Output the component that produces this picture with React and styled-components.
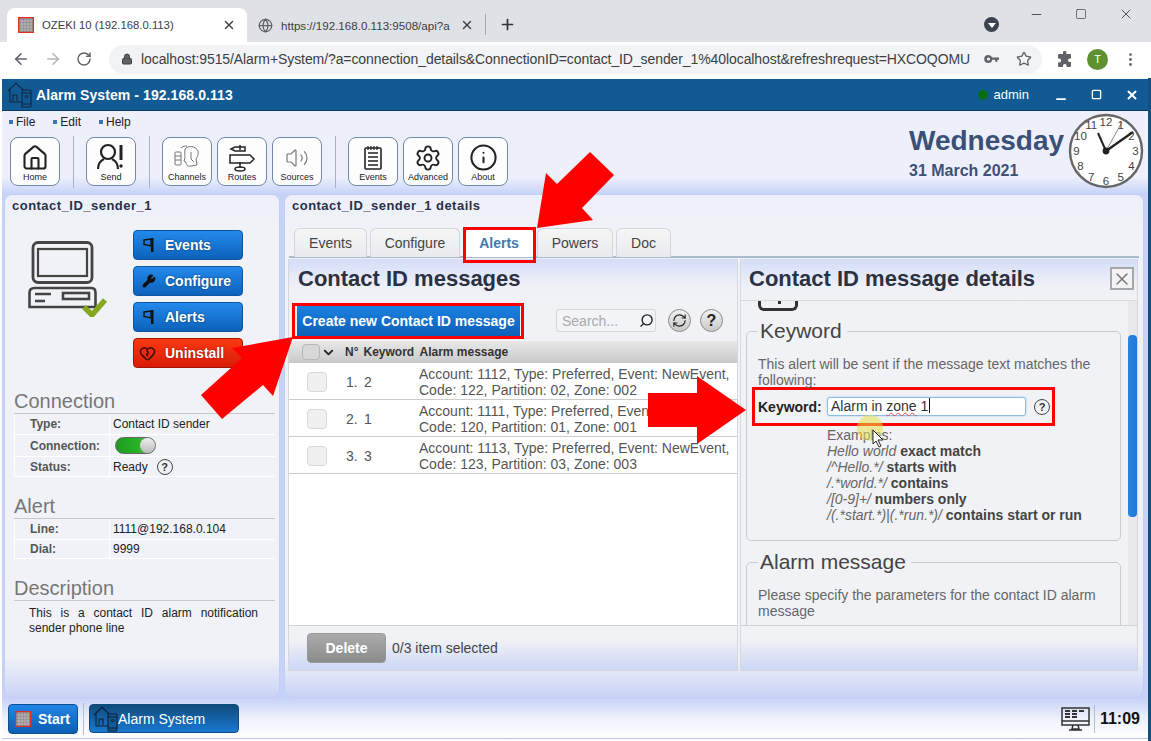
import React from "react";
import styled, { createGlobalStyle } from "styled-components";
import { ArrowLeft, ArrowRight, RotateCw, Lock, Star, EllipsisVertical, Minus, Square, X, Plus, Globe, Search, RefreshCw, ChevronDown, Wrench, HeartCrack, Home, Volume2, Settings, Info } from "lucide-react";

const Global = createGlobalStyle`
  html, body { margin: 0; padding: 0; background: #fff; overflow: hidden; }
  * { box-sizing: border-box; }
  body { font-family: "Liberation Sans", Arial, sans-serif; }
`;

const Page = styled.div`position: relative; width: 1151px; height: 741px; overflow: hidden; background: #fff;`;

const TabStrip = styled.div`height: 42px; background: #dee1e6; display: flex; align-items: flex-end; padding-left: 7px; position: relative;`;
const BrowserTab = styled.div`
  width: ${p => p.$w}px; height: 34px; display: flex; align-items: center; gap: 8px; padding: 0 11px;
  background: ${p => p.$active ? "#fff" : "transparent"}; border-radius: 8px 8px 0 0;
  color: #3c4043; white-space: nowrap; overflow: hidden;
`;
const TabLabel = styled.span`flex: 1; overflow: hidden; font-size: ${p => p.$fs}px;`;
const TabDivider = styled.div`width: 1px; height: 21px; background: #a6a9ae; margin: 0 0 7px 0;`;
const PlusWrap = styled.div`margin: 0 0 9px 13px; display: flex;`;
const StripRight = styled.div`position: absolute; right: 0; top: 0; height: 28px; display: flex; align-items: center; gap: 31px; padding-right: 17px; color: #222;`;
const ProfileDot = styled.div`position: absolute; left: 984px; top: 17px; width: 15px; height: 15px; border-radius: 50%; background: #3c4350; display: flex; align-items: center; justify-content: center;`;
const DotArrow = styled.div`width: 0; height: 0; border-left: 4px solid transparent; border-right: 4px solid transparent; border-top: 5px solid #fff; margin-top: 1px;`;

const NavBar = styled.div`height: 36px; display: flex; align-items: center; background: #fff; padding: 0 0 2px 12px; color: #5f6368;`;
const NavButtons = styled.div`display: flex; align-items: center; gap: 14px; margin-right: 17px;`;
const Omnibox = styled.div`width: 933px; height: 29px; border-radius: 15px; background: #f1f3f4; display: flex; align-items: center; padding: 0 10px 0 12px; gap: 8px; font-size: 14px; color: #3c4043; white-space: nowrap;`;
const Url = styled.span`flex: 1; letter-spacing: -0.09px; overflow: hidden;`;
const OmniIcons = styled.div`display: flex; gap: 17px; align-items: center; color: #5f6368;`;
const NavRight = styled.div`display: flex; align-items: center; gap: 14px; margin-left: 15px;`;
const Avatar = styled.div`width: 21px; height: 21px; border-radius: 50%; background: #5f9132; color: #fff; font-size: 11px; display: flex; align-items: center; justify-content: center;`;

const AppWindow = styled.div`
  margin: 1px 0 0 2px; width: 1146px; height: 659px; display: flex; flex-direction: column;
  background: #edf0fb;
`;
const RightEdge = styled.div`position: absolute; left: 1148px; top: 78px; width: 3px; height: 663px; background: #14507e;`;

const TitleBar = styled.div`height: 32px; flex: none; background: #125a93; border-bottom: 1px solid #0d3a5f; display: flex; align-items: center; padding: 0 9px 0 5px; color: #fff;`;
const TitleText = styled.div`font-size: 14px; font-weight: bold; margin-left: 4px; flex: 1; letter-spacing: 0.08px;`;
const OnlineDot = styled.span`width: 10px; height: 10px; border-radius: 50%; background: #0a6d12; margin-right: 6px;`;
const AdminName = styled.span`font-size: 13px; margin-right: 25px;`;
const WinControls = styled.div`display: flex; gap: 23px; align-items: center;`;

const Header = styled.div`height: 83px; flex: none; display: flex; background: linear-gradient(#edf0fb 0, #edf0fb 66px, #c6d2f8 100%);`;
const HeaderLeft = styled.div`flex: 1; padding-left: 6px;`;
const Menu = styled.div`display: flex; gap: 18px; height: 21px; align-items: center; font-size: 12px; color: #222; padding-left: 1px;`;
const MenuItem = styled.span`display: flex; align-items: center; gap: 3px; &::before { content: ""; width: 4px; height: 4px; background: #3a78b5; }`;
const Toolbar = styled.div`display: flex; margin-top: 5px; align-items: flex-start; padding-left: 2px;`;
const ToolBtn = styled.div`
  width: 50px; height: 49px; border: 1px solid #6f8aad; border-radius: 8px; background: #fdfdfe;
  display: flex; flex-direction: column; align-items: center; justify-content: flex-start; padding-top: 5px;
  font-size: 9px; color: #222; margin-right: 5px; flex: none; position: relative;
`;
const ToolIcon = styled.div`height: 29px; display: flex; align-items: center; justify-content: center; color: #222;`;
const ToolLabel = styled.div`margin-top: 0;`;
const ToolSep = styled.div`width: 1px; height: 52px; background: #a9b2c2; margin: -1px 12px 0 8px; flex: none;`;
const DateBlock = styled.div`width: 158px; padding-top: 14px; color: #3b5078; font-weight: bold; flex: none;`;
const DayName = styled.div`font-size: 28px; line-height: 31px; margin-left: -1px;`;
const DateLine = styled.div`font-size: 16px; line-height: 18px; margin: 6px 0 0 -1px; color: #3f5175;`;
const ClockBox = styled.div`width: 80px; flex: none; padding-top: 2px;`;

const Main = styled.div`height: 504px; flex: none; display: flex; gap: 4px; padding: 0 4px 0 2px; background: #c6d2f8;`;
const Panel = styled.div`
  width: ${p => p.$w ? p.$w + "px" : "auto"}; flex: ${p => p.$w ? "none" : 1}; position: relative;
  border: 1px solid #c3cef2; border-radius: 8px; display: flex; flex-direction: column;
  background: linear-gradient(#edf0fa 0, #f0f2f7 30px, #f0f2f7 462px, #c9d4f6 100%);
`;
const PanelTitle = styled.div`font-size: 13px; font-weight: bold; letter-spacing: 0.48px; color: #29304a; padding: 3px 0 0 ${p => p.$pad}px; height: 20px; line-height: 15px;`;

const TopRow = styled.div`display: flex; padding-top: 15px; height: 173px;`;
const BigIcon = styled.div`width: 128px; padding: 11px 0 0 23px; flex: none;`;
const ActionList = styled.div`display: flex; flex-direction: column; gap: 6px; width: 110px;`;
const ActionBtn = styled.div`
  height: 30px; border-radius: 4px; border: 1px solid ${p => p.$red ? "#a01505" : "#0e56a0"};
  background: ${p => p.$red ? "linear-gradient(#fb3a12,#d81c06)" : "linear-gradient(#2389ec,#0c62b9)"};
  color: #fff; font-size: 14px; font-weight: bold; text-shadow: 0 0 2px rgba(0,0,0,.5);
  display: flex; align-items: center; padding-left: ${p => p.$red ? 5 : 8}px; gap: 9px;
`;
const SideSection = styled.div`padding-left: 9px; margin-top: ${p => p.$mt}px;`;
const SideHead = styled.div`font-size: 20px; line-height: 23px; color: #777; border-bottom: 1px solid #c6c8cc; width: 261px; height: 24px;`;
const InfoTable = styled.div`width: 261px; border-left: 1px solid #fff;`;
const InfoRow = styled.div`display: grid; grid-template-columns: 95px 1fr; height: ${p => p.$h}px; align-items: center; border-bottom: 1px solid #fff;`;
const InfoKey = styled.div`font-size: 12px; font-weight: bold; color: #555; padding-left: 15px; height: 100%; display: flex; align-items: center; border-right: 1px solid #fff;`;
const InfoVal = styled.div`font-size: 12px; color: #222; padding-left: 3px; display: flex; align-items: center; gap: 9px;`;
const Toggle = styled.div`width: 41px; height: 17px; margin-left: 2px; border-radius: 9px; background: linear-gradient(90deg,#1f9a1f,#27b327 55%,#9aa69a); border: 1px solid #666; position: relative; &::after { content: ""; position: absolute; right: 0; top: 0; width: 15px; height: 15px; border-radius: 50%; background: linear-gradient(#eee,#bbb); }`;
const HelpRound = styled.div`width: ${p => p.$s}px; height: ${p => p.$s}px; border-radius: 50%; border: 1.5px solid #444; color: #333; font-size: ${p => p.$s - 5}px; font-weight: bold; display: flex; align-items: center; justify-content: center; flex: none;`;
const DescText = styled.div`font-size: 12px; line-height: 15px; color: #222; padding: 5px 0 0 15px; width: 244px; text-align: justify;`;

const TabsRow = styled.div`display: flex; height: 30px; margin: 13px 4px 0 4px; padding-left: 5px; gap: 3px; border-bottom: 2px solid #a8bad0;`;
const Tab = styled.div`
  width: ${p => p.$w}px; height: 29px; border: 1px solid #d3d6dc; border-bottom: none; border-radius: 6px 6px 0 0;
  display: flex; align-items: center; justify-content: center; font-size: 14px;
  background: ${p => p.$active ? "#fff" : "linear-gradient(#f6f6f6,#e9eaee)"}; color: ${p => p.$active ? "#4178b0" : "#444"}; font-weight: ${p => p.$active ? "bold" : "normal"};
  position: relative; margin-left: ${p => p.$ml || 0}px;
  ${p => p.$active && `&::after { content: ""; position: absolute; left: -2px; top: -2px; right: -3px; bottom: -6px; border: 3px solid #f00; }`}
`;
const Panes = styled.div`display: flex; height: 412px; margin: 1px 4px 0 3px; gap: 2px;`;
const Pane = styled.div`width: ${p => p.$w}px; flex: none; display: flex; flex-direction: column; border: 1px solid #d5d7dc; border-top: none; background: #f1f2f6;`;
const PaneHead = styled.div`height: 42px; flex: none; background: linear-gradient(#d4ddf8,#eef0f8 26px,#f1f2f6); font-size: 22px; font-weight: bold; color: #2c3140; padding: 7px 0 0 ${p => p.$line ? 8 : 9}px; line-height: 26px; display: flex; justify-content: space-between; border-bottom: ${p => p.$line ? "1px solid #d8d9dd" : "none"};`;
const CloseBox = styled.div`width: 24px; height: 23px; border: 2px solid #a7a7a7; margin: 1px 3px 0 0; display: flex; align-items: center; justify-content: center; color: #777; background: #f3f3f5;`;
const ActionsBar = styled.div`display: flex; height: 40px; flex: none; padding: 4px 0 0 6px; align-items: flex-start;`;
const CreateBtn = styled.div`width: 223px; height: 30px; margin: 1px 36px 0 2px; background: linear-gradient(#1c82e2,#0e5fb6); color: #fff; font-size: 14px; font-weight: bold; display: flex; align-items: center; justify-content: center; position: relative; white-space: nowrap; &::after { content: ""; position: absolute; left: -5px; top: -3px; right: -4px; bottom: -3px; border: 3px solid #f00; }`;
const SearchBox = styled.div`width: 100px; height: 23px; margin-top: 4px; border: 1px solid #d4d6da; border-radius: 3px; display: flex; align-items: center; justify-content: space-between; padding: 0 1px 0 5px; font-size: 14px; color: #aaa; background: #f3f4f7;`;
const RoundTools = styled.div`display: flex; gap: 9px; margin: 4px 0 0 12px;`;
const RoundBtn = styled.div`width: 23px; height: 23px; border-radius: 50%; border: 1px solid #888; background: linear-gradient(#f0f0f0,#c9c9c9); display: flex; align-items: center; justify-content: center; font-size: 16px; font-weight: bold; color: #222;`;
const ListHead = styled.div`height: 22px; flex: none; background: linear-gradient(#e8e8e8,#c9c9c9); display: flex; align-items: center; font-size: 12px; font-weight: bold; color: #333; padding-left: 13px;`;
const HeadBox = styled.div`width: 18px; height: 16px; border: 1px solid #b5b5b5; border-radius: 4px; background: #d8d8d8; flex: none;`;
const HeadCaret = styled.div`width: 25px; padding-left: 1px; display: flex; flex: none; color: #222;`;
const HeadKw = styled.span`margin-left: 5px; width: 56px;`;
const ListBody = styled.div`flex: 1; background: #fff; overflow: hidden;`;
const ListRow = styled.div`height: 37px; display: grid; grid-template-columns: 57px 18px 55px 1fr; align-items: center; border-bottom: 1px solid #ccc; font-size: 14px; color: #555; padding-top: 1px;`;
const RowCheck = styled.div`width: 20px; height: 20px; border: 1px solid #d8d8d8; border-radius: 4px; background: #f0f0f0; margin-left: 18px;`;
const RowMsg = styled.div`line-height: 16px; white-space: nowrap; overflow: hidden;`;
const PaneFoot = styled.div`height: 45px; flex: none; border-top: 1px solid #d0d1d5; display: flex; align-items: center; background: linear-gradient(#f1f2f6 30%,#ccd6f5); font-size: 14px; color: #444; gap: 6px; padding-left: 18px;`;
const GrayBtn = styled.div`width: 79px; height: 30px; border-radius: 4px; background: linear-gradient(#ababab,#8b8b8b); color: #fff; font-weight: bold; font-size: 14px; display: flex; align-items: center; justify-content: center; border: 1px solid #999;`;

const DetailBody = styled.div`flex: 1; display: flex; overflow: hidden; min-height: 0;`;
const DetailScroll = styled.div`flex: 1; padding-left: 5px; overflow: hidden;`;
const TopIconPiece = styled.div`width: 40px; height: 10px; margin-left: 12px; border: 3px solid #333; border-top: none; border-radius: 0 0 6px 6px; position: relative; &::after { content: ""; position: absolute; left: 17px; top: 0; width: 3px; height: 3px; background: #333; }`;
const Field = styled.fieldset`margin: ${p => p.$mt}px 0 0 0; border: 1px solid #c9cbd0; border-radius: 5px; padding: 15px 12px 12px 11px; width: 375px; height: ${p => p.$h}px;`;
const FieldLegend = styled.legend`font-size: 21px; line-height: 20px; color: #444; padding: 0 5px 0 2px;`;
const FieldText = styled.div`font-size: 14px; line-height: 16px; color: #666;`;
const KeywordRow = styled.div`display: flex; align-items: center; height: 39px; width: 303px; border: 3px solid #f00; margin: -1px 0 0 -6px; padding-left: 3px;`;
const KeywordLabel = styled.div`font-size: 14px; font-weight: bold; color: #222; width: 69px;`;
const KeywordInput = styled.div`width: 199px; height: 19px; border: 1px solid #8dbde6; border-radius: 3px; background: #fff; font-size: 14px; color: #333; padding-left: 3px; line-height: 17px; box-shadow: 0 0 2px #9cc9ee; flex: none;`;
const Squiggle = styled.span`text-decoration: underline wavy #e05050 1px;`;
const Caret = styled.span`display: inline-block; width: 1px; height: 15px; background: #111; vertical-align: -2px; margin-left: 1px;`;
const KeyHelp = styled.div`margin-left: 8px;`;
const Examples = styled.div`font-size: 14px; line-height: 16px; color: #666; margin-left: 69px; padding-top: 1px; white-space: nowrap;`;
const Strong = styled.b`color: #444;`;
const ScrollTrack = styled.div`width: 9px; flex: none; background: #e9e9ec; padding-top: 34px;`;
const ScrollThumb = styled.div`height: 182px; background: linear-gradient(90deg,#2d84dc,#1c78dc); border-radius: 4px;`;

const Taskbar = styled.div`height: 40px; flex: none; display: flex; align-items: center; background: linear-gradient(#c6d2f8,#eef1fc 50%,#fff); padding: 1px 0 0 6px; position: relative;`;
const StartBtn = styled.div`width: 70px; height: 30px; border-radius: 4px; background: linear-gradient(#2185e6,#0c5fb4); border: 1px solid #0e4f93; color: #fff; font-size: 14px; font-weight: bold; display: flex; align-items: center; gap: 7px; padding-left: 6px;`;
const TaskSep = styled.div`width: 1px; height: 32px; background: #b8bdc9; margin: 0 5px;`;
const WindowBtn = styled.div`width: 150px; height: 29px; border-radius: 4px; background: linear-gradient(#0f4a7c,#1b79d0); border: 1px solid #0d4a82; color: #fff; font-size: 14px; display: flex; align-items: center; gap: 0; padding-left: 3px;`;
const TaskRight = styled.div`margin-left: auto; display: flex; align-items: center; padding-right: 8px;`;
const TaskTime = styled.div`font-size: 16px; font-weight: bold; color: #111; border-left: 1px solid #b8bdc9; height: 28px; display: flex; align-items: center; padding-left: 5px; margin-left: 4px;`;
const BottomLine = styled.div`position: absolute; left: 2px; right: 3px; top: 738px; height: 1px; background: #bcc8e8;`;

const Overlay = styled.svg`position: absolute; left: 0; top: 0; pointer-events: none;`;

const OzekiLogo = ({ s = 16 }) => (
  <svg width={s} height={s} viewBox="0 0 16 16" style={{ flex: "none" }}>
    <rect x="0.5" y="0.5" width="15" height="15" fill="#8a8a8a" stroke="#e0301e" strokeWidth="1.4" />
    {[4, 7, 10, 13].map(v => <path key={v} d={`M${v} 1.5V14.5M1.5 ${v}H14.5`} stroke="#c4c4c4" strokeWidth=".7" />)}
  </svg>
);
const HouseLogo = ({ c = "#12253f" }) => (
  <svg width="25" height="26" viewBox="0 0 25 26" fill="none" stroke={c} strokeWidth="1.1" style={{ flex: "none" }}>
    <path d="M1 9 9 1l7 7M3 8v12h13" />
    <path d="M6 19v-6h4v6" />
    <rect x="15" y="8" width="9" height="17" rx="1" fill="#125a93" />
    <path d="M15 11h9M15 22h9" />
    <path d="M17.5 14.5q2-1.5 4 0M18.5 16q1-.8 2 0" />
  </svg>
);
const FlagIcon = () => (
  <svg width="14" height="16" viewBox="0 0 14 16" style={{ flex: "none" }}>
    <rect x="9" y="1" width="2.5" height="14" fill="#111" />
    <path d="M2 3 9 2v7L2 7.5Z" fill="none" stroke="#111" strokeWidth="1.4" />
  </svg>
);
const KeyIcon = () => (
  <svg width="15" height="10" viewBox="0 0 15 10" fill="#5f6368">
    <path fillRule="evenodd" d="M4.5 1a4 4 0 0 1 3.7 2.5H15v2.2h-1.6v2h-2.2v-2H8.2A4 4 0 1 1 4.5 1Zm0 2.4a1.6 1.6 0 1 0 0 3.2 1.6 1.6 0 0 0 0-3.2Z" />
  </svg>
);
const PuzzleIcon = () => (
  <svg width="16" height="16" viewBox="0 0 16 16" fill="#5f6368">
    <path d="M6 1.5a1.7 1.7 0 0 1 3.4 0V3H13a1 1 0 0 1 1 1v3.4h-1.2a1.8 1.8 0 0 0 0 3.6H14V15a1 1 0 0 1-1 1H9.6v-1.2a1.8 1.8 0 0 0-3.6 0V16H2a1 1 0 0 1-1-1v-3.6h1.2a1.9 1.9 0 0 0 0-3.8H1V4a1 1 0 0 1 1-1h4Z" />
  </svg>
);
const SendIcon = () => (
  <svg width="30" height="29" viewBox="0 0 30 29" fill="none" stroke="#222" strokeWidth="2.2">
    <circle cx="12" cy="9" r="7" />
    <path d="M2 26c0-7 4-9 6-10M22 26c0-7-4-9-6-10" />
    <path d="M25 2v15" strokeWidth="3" />
    <circle cx="25" cy="23" r="1.7" fill="#222" stroke="none" />
  </svg>
);
const ChannelsIcon = () => (
  <svg width="28" height="27" viewBox="0 0 28 27" fill="none" stroke="#777" strokeWidth="1">
    <rect x="2" y="8" width="6" height="13" rx="1" />
    <path d="M2 12h6M2 16h6" />
    <path d="M12 5c3-4 11-3 13 2 1 4-1 6-2 8l1 6-6 1c-4 1-5-2-5-4l-2-1c2-3 0-8 1-12Z" />
    <path d="M18 8v7l3 3M8 4c2-2 4-2 6-2" />
  </svg>
);
const RoutesIcon = () => (
  <svg width="28" height="28" viewBox="0 0 28 28" fill="none" stroke="#222" strokeWidth="1.5">
    <path d="M12 1v5M12 18v6" />
    <path d="M7 3h10v4H7L3 5Z" />
    <path d="M2 11h20l4 4-4 4H2Z" />
    <ellipse cx="12" cy="25" rx="5" ry="2" />
  </svg>
);
const NotesIcon = () => (
  <svg width="22" height="26" viewBox="0 0 22 26" fill="none" stroke="#222" strokeWidth="1.6">
    <rect x="3" y="3" width="16" height="21" rx="1" />
    <path d="M6 8h10M6 12h10M6 16h10M6 20h10" />
    <path d="M6 1v4M9 1v4M12 1v4M15 1v4" strokeWidth="1.2" />
  </svg>
);
const ComputerIcon = () => (
  <svg width="80" height="76" viewBox="0 0 80 76" fill="none" stroke="#444" strokeWidth="2.6">
    <rect x="5" y="1.5" width="59" height="40" rx="5" strokeWidth="2.8" />
    <rect x="10" y="8" width="49" height="27" strokeWidth="2.2" />
    <path d="M1.5 66V52q0-5 5-5h57q4 0 4 5v14z" />
    <rect x="35" y="52" width="26" height="6" />
    <path d="M7 53h16M7 60h10" />
    <path d="M56 66l8 8 13-15" stroke="#86a821" strokeWidth="5.4" />
  </svg>
);
const MonitorIcon = () => (
  <svg width="29" height="26" viewBox="0 0 29 26" fill="none" stroke="#333" strokeWidth="1.5">
    <rect x="1" y="2" width="27" height="17" />
    <path d="M1 15h27" />
    <path d="M12 19l-1 4h7l-1-4M8 24h13" />
    <path d="M4 5h5M11 5h5M18 5h5M4 8h5M11 8h5M4 11h5M11 11h5" strokeWidth="2" />
  </svg>
);
const Clock = () => {
  const nums = [12, 1, 2, 3, 4, 5, 6, 7, 8, 9, 10, 11];
  return (
    <svg width="76" height="76" viewBox="0 0 76 76">
      <circle cx="38" cy="38" r="36" fill="#fff" stroke="#666" strokeWidth="2.4" />
      {nums.map((n, i) => {
        const a = (i * Math.PI) / 6;
        return <text key={n} x={38 + 29.5 * Math.sin(a)} y={38 - 29.5 * Math.cos(a) + 4} fontSize="11.5" textAnchor="middle" fill="#444" fontFamily="Liberation Sans">{n}</text>;
      })}
      <path d="M38 38 30 20" stroke="#222" strokeWidth="2" />
      <path d="M38 38 65 19" stroke="#222" strokeWidth="2.3" />
      <path d="M38 38 54 9" stroke="#555" strokeWidth=".7" />
      <circle cx="38" cy="38" r="3.4" fill="#222" />
    </svg>
  );
};

const tools1 = [["Home", <Home size={28} strokeWidth={1.8} />]];
const tools2 = [["Send", <SendIcon />]];
const tools3 = [["Channels", <ChannelsIcon />], ["Routes", <RoutesIcon />], ["Sources", <Volume2 size={24} strokeWidth={1.2} color="#777" />]];
const tools4 = [["Events", <NotesIcon />], ["Advanced", <Settings size={28} strokeWidth={1.6} />], ["About", <Info size={29} strokeWidth={1.7} />]];
const Group = ({ items }) => items.map(([l, i]) => <ToolBtn key={l}><ToolIcon>{i}</ToolIcon><ToolLabel>{l}</ToolLabel></ToolBtn>);

const rows = [
  ["1.", "2", "Account: 1112, Type: Preferred, Event: NewEvent,", "Code: 122, Partition: 02, Zone: 002"],
  ["2.", "1", "Account: 1111, Type: Preferred, Event: NewEvent,", "Code: 120, Partition: 01, Zone: 001"],
  ["3.", "3", "Account: 1113, Type: Preferred, Event: NewEvent,", "Code: 123, Partition: 03, Zone: 003"],
];

export default function App() {
  return (
    <Page>
      <Global />
      <TabStrip>
        <BrowserTab $active $w={240}><OzekiLogo /><TabLabel $fs={11.3}>OZEKI 10 (192.168.0.113)</TabLabel><X size={14} strokeWidth={2.4} /></BrowserTab>
        <BrowserTab $w={238}><Globe size={15} color="#5f6368" /><TabLabel $fs={11.6}>https://192.168.0.113:9508/api?a</TabLabel><X size={14} strokeWidth={2.4} /></BrowserTab>
        <TabDivider />
        <PlusWrap><Plus size={17} strokeWidth={2.4} color="#333" /></PlusWrap>
        <ProfileDot><DotArrow /></ProfileDot>
        <StripRight><Minus size={15} strokeWidth={1.2} /><Square size={12} strokeWidth={1.2} /><X size={16} strokeWidth={1.1} /></StripRight>
      </TabStrip>
      <NavBar>
        <NavButtons><ArrowLeft size={18} strokeWidth={2.2} /><ArrowRight size={18} strokeWidth={2.2} color="#b5b7ba" /><RotateCw size={16} strokeWidth={2.2} /></NavButtons>
        <Omnibox>
          <Lock size={12} fill="#5f6368" />
          <Url>localhost:9515/Alarm+System/?a=connection_details&amp;ConnectionID=contact_ID_sender_1%40localhost&amp;refreshrequest=HXCOQOMU</Url>
          <OmniIcons><KeyIcon /><Star size={16} /></OmniIcons>
        </Omnibox>
        <NavRight><PuzzleIcon /><Avatar>T</Avatar><EllipsisVertical size={17} /></NavRight>
      </NavBar>

      <AppWindow>
        <TitleBar>
          <HouseLogo />
          <TitleText>Alarm System - 192.168.0.113</TitleText>
          <OnlineDot /><AdminName>admin</AdminName>
          <WinControls><Minus size={14} strokeWidth={3} style={{ marginTop: 8 }} /><Square size={11} strokeWidth={3} /><X size={14} strokeWidth={3.4} /></WinControls>
        </TitleBar>
        <Header>
          <HeaderLeft>
            <Menu><MenuItem>File</MenuItem><MenuItem>Edit</MenuItem><MenuItem>Help</MenuItem></Menu>
            <Toolbar>
              <Group items={tools1} /><ToolSep />
              <Group items={tools2} /><ToolSep />
              <Group items={tools3} /><ToolSep />
              <Group items={tools4} />
            </Toolbar>
          </HeaderLeft>
          <DateBlock><DayName>Wednesday</DayName><DateLine>31 March 2021</DateLine></DateBlock>
          <ClockBox><Clock /></ClockBox>
        </Header>
        <Main>
          <Panel $w={276}>
            <PanelTitle $pad={7}>contact_ID_sender_1</PanelTitle>
            <TopRow>
              <BigIcon><ComputerIcon /></BigIcon>
              <ActionList>
                <ActionBtn><FlagIcon />Events</ActionBtn>
                <ActionBtn><Wrench size={14} color="#111" fill="#111" />Configure</ActionBtn>
                <ActionBtn><FlagIcon />Alerts</ActionBtn>
                <ActionBtn $red><HeartCrack size={17} color="#3a0a05" />Uninstall</ActionBtn>
              </ActionList>
            </TopRow>
            <SideSection $mt={2}>
              <SideHead>Connection</SideHead>
              <InfoTable>
                <InfoRow $h={21}><InfoKey>Type:</InfoKey><InfoVal>Contact ID sender</InfoVal></InfoRow>
                <InfoRow $h={22}><InfoKey>Connection:</InfoKey><InfoVal><Toggle /></InfoVal></InfoRow>
                <InfoRow $h={20}><InfoKey>Status:</InfoKey><InfoVal>Ready<HelpRound $s={16}>?</HelpRound></InfoVal></InfoRow>
              </InfoTable>
            </SideSection>
            <SideSection $mt={18}>
              <SideHead>Alert</SideHead>
              <InfoTable>
                <InfoRow $h={21}><InfoKey>Line:</InfoKey><InfoVal>1111@192.168.0.104</InfoVal></InfoRow>
                <InfoRow $h={19}><InfoKey>Dial:</InfoKey><InfoVal>9999</InfoVal></InfoRow>
              </InfoTable>
            </SideSection>
            <SideSection $mt={18}>
              <SideHead>Description</SideHead>
              <DescText>This is a contact ID alarm notification sender phone line</DescText>
            </SideSection>
          </Panel>
          <Panel>
            <PanelTitle $pad={7}>contact_ID_sender_1 details</PanelTitle>
            <TabsRow>
              <Tab $w={73}>Events</Tab>
              <Tab $w={90}>Configure</Tab>
              <Tab $w={70} $active $ml={1}>Alerts</Tab>
              <Tab $w={76}>Powers</Tab>
              <Tab $w={55}>Doc</Tab>
            </TabsRow>
            <Panes>
              <Pane $w={450}>
                <PaneHead>Contact ID messages</PaneHead>
                <ActionsBar>
                  <CreateBtn>Create new Contact ID message</CreateBtn>
                  <SearchBox>Search...<Search size={15} color="#222" strokeWidth={2.2} style={{ transform: "scaleX(-1)" }} /></SearchBox>
                  <RoundTools><RoundBtn><RefreshCw size={15} strokeWidth={1.8} /></RoundBtn><RoundBtn>?</RoundBtn></RoundTools>
                </ActionsBar>
                <ListHead>
                  <HeadBox /><HeadCaret><ChevronDown size={15} strokeWidth={3} /></HeadCaret>
                  <span>N°</span><HeadKw>Keyword</HeadKw><span>Alarm message</span>
                </ListHead>
                <ListBody>
                  {rows.map(r => (
                    <ListRow key={r[0]}>
                      <RowCheck /><span>{r[0]}</span><span>{r[1]}</span>
                      <RowMsg>{r[2]}<br />{r[3]}</RowMsg>
                    </ListRow>
                  ))}
                </ListBody>
                <PaneFoot><GrayBtn>Delete</GrayBtn>0/3 item selected</PaneFoot>
              </Pane>
              <Pane $w={398}>
                <PaneHead $line>Contact ID message details<CloseBox><X size={20} strokeWidth={1.8} /></CloseBox></PaneHead>
                <DetailBody>
                  <DetailScroll>
                    <TopIconPiece />
                    <Field $mt={10} $h={220}>
                      <FieldLegend>Keyword</FieldLegend>
                      <FieldText>This alert will be sent if the message text matches the following:</FieldText>
                      <KeywordRow>
                        <KeywordLabel>Keyword:</KeywordLabel>
                        <KeywordInput>Alarm in <Squiggle>zone</Squiggle> 1<Caret /></KeywordInput>
                        <KeyHelp><HelpRound $s={16}>?</HelpRound></KeyHelp>
                      </KeywordRow>
                      <Examples>
                        Examples:<br />
                        <i>Hello world</i> <Strong>exact match</Strong><br />
                        <i>/^Hello.*/</i> <Strong>starts with</Strong><br />
                        <i>/.*world.*/</i> <Strong>contains</Strong><br />
                        <i>/[0-9]+/</i> <Strong>numbers only</Strong><br />
                        <i>/(.*start.*)|(.*run.*)/</i> <Strong>contains start or run</Strong>
                      </Examples>
                    </Field>
                    <Field $mt={11} $h={120}>
                      <FieldLegend>Alarm message</FieldLegend>
                      <FieldText>Please specify the parameters for the contact ID alarm message</FieldText>
                    </Field>
                  </DetailScroll>
                  <ScrollTrack><ScrollThumb /></ScrollTrack>
                </DetailBody>
                <PaneFoot />
              </Pane>
            </Panes>
          </Panel>
        </Main>
        <Taskbar>
          <StartBtn><OzekiLogo s={16} />Start</StartBtn>
          <TaskSep />
          <WindowBtn><HouseLogo c="#0b1f38" />Alarm System</WindowBtn>
          <TaskRight><MonitorIcon /><TaskTime>11:09</TaskTime></TaskRight>
        </Taskbar>
      </AppWindow>
      <RightEdge />
      <BottomLine />
      <Overlay width="1151" height="741" viewBox="0 0 1151 741">
        <circle cx="870" cy="428" r="13" fill="#e8e04a" opacity=".55" />
        <path d="M873 430v14l3-3 3 6 2-1-3-6h5Z" fill="#fff" stroke="#222" strokeWidth="1" />
        <polygon fill="#f00" points="590,152 614,175 582,208 593,220 537,228 546,173 557,184" />
        <polygon fill="#f00" points="293,337 232,348 242,358 201,395 222,419 263,385 273,396" />
        <polygon fill="#f00" points="648,393 697,393 697,376 746,410 697,444 697,427 648,427" />
      </Overlay>
    </Page>
  );
}
